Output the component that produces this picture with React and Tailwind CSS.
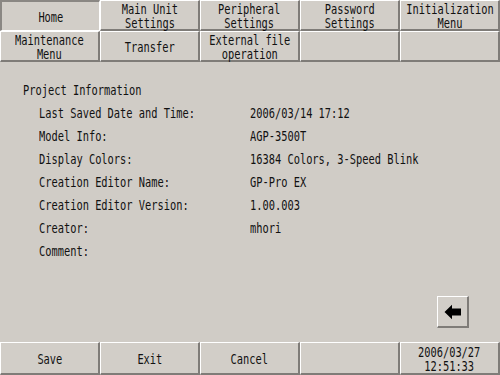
import React from "react";

const FONT = { fontFamily: '"DejaVu Sans Mono", "Liberation Mono", monospace' };

function Narrow({ children, center }) {
  return (
    <span
      className={
        center
          ? "inline-block whitespace-nowrap text-center origin-center scale-x-[0.74]"
          : "inline-block whitespace-nowrap origin-left scale-x-[0.74]"
      }
    >
      {children}
    </span>
  );
}

function Key({ lines, pressed }) {
  return (
    <div
      className={
        pressed
          ? "flex items-center justify-center pt-px bg-[#d2cec8] border-t-2 border-l-2 border-b border-r border-t-[#8a8783] border-l-[#8a8783] border-b-white border-r-white"
          : "flex items-center justify-center pt-px bg-[#d2cec8] border-t border-l border-b-2 border-r-2 border-t-white border-l-white border-b-[#7f7c78] border-r-[#7f7c78]"
      }
    >
      {lines.length > 0 && (
        <Narrow center>
          {lines.map((l, i) => (
            <span key={i} className="block">
              {l}
            </span>
          ))}
        </Narrow>
      )}
    </div>
  );
}

const topRow = [
  { lines: ["Home"], pressed: true },
  { lines: ["Main Unit", "Settings"] },
  { lines: ["Peripheral", "Settings"] },
  { lines: ["Password", "Settings"] },
  { lines: ["Initialization", "Menu"] },
  { lines: ["Maintenance", "Menu"] },
  { lines: ["Transfer"] },
  { lines: ["External file", "operation"] },
  { lines: [] },
  { lines: [] },
];

const info = [
  ["Last Saved Date and Time:", "2006/03/14 17:12"],
  ["Model Info:", "AGP-3500T"],
  ["Display Colors:", "16384 Colors, 3-Speed Blink"],
  ["Creation Editor Name:", "GP-Pro EX"],
  ["Creation Editor Version:", "1.00.003"],
  ["Creator:", "mhori"],
  ["Comment:", ""],
];

export default function App() {
  return (
    <div
      style={FONT}
      className="w-[500px] h-[375px] flex flex-col bg-[#d0ccc6] text-[#111] text-[14px] leading-[14px] overflow-hidden"
    >
      {/* Tabs */}
      <div className="grid grid-cols-5 grid-rows-[31px_31px]">
        {topRow.map((t, i) => (
          <Key key={i} lines={t.lines} pressed={t.pressed} />
        ))}
      </div>

      {/* Project info */}
      <div className="flex-1 flex flex-col pt-[17px] pl-[23px] leading-[23px]">
        <Narrow>Project Information</Narrow>
        <div className="grid grid-cols-[211px_1fr] pl-[16px]">
          {info.map(([label, value]) => (
            <React.Fragment key={label}>
              <div className="h-[23px]">
                <Narrow>{label}</Narrow>
              </div>
              <div className="h-[23px]">
                <Narrow>{value}</Narrow>
              </div>
            </React.Fragment>
          ))}
        </div>
        <div className="flex-1" />
        <div className="flex justify-end pr-[31px] pb-[14px]">
          <button className="w-[32px] h-[32px] flex items-center justify-center bg-[#d2cec8] border-t border-l border-b-2 border-r-2 border-t-white border-l-white border-b-[#7f7c78] border-r-[#7f7c78]">
            <svg width="18" height="16" viewBox="0 0 18 16">
              <path d="M0.5 8 L8 0.8 L8 4.5 L17 4.5 L17 11.5 L8 11.5 L8 15.2 Z" fill="#000" />
            </svg>
          </button>
        </div>
      </div>

      {/* Bottom bar */}
      <div className="grid grid-cols-5 h-[33px]">
        <Key lines={["Save"]} />
        <Key lines={["Exit"]} />
        <Key lines={["Cancel"]} />
        <Key lines={[]} />
        <Key lines={["2006/03/27", "12:51:33"]} />
      </div>
    </div>
  );
}
